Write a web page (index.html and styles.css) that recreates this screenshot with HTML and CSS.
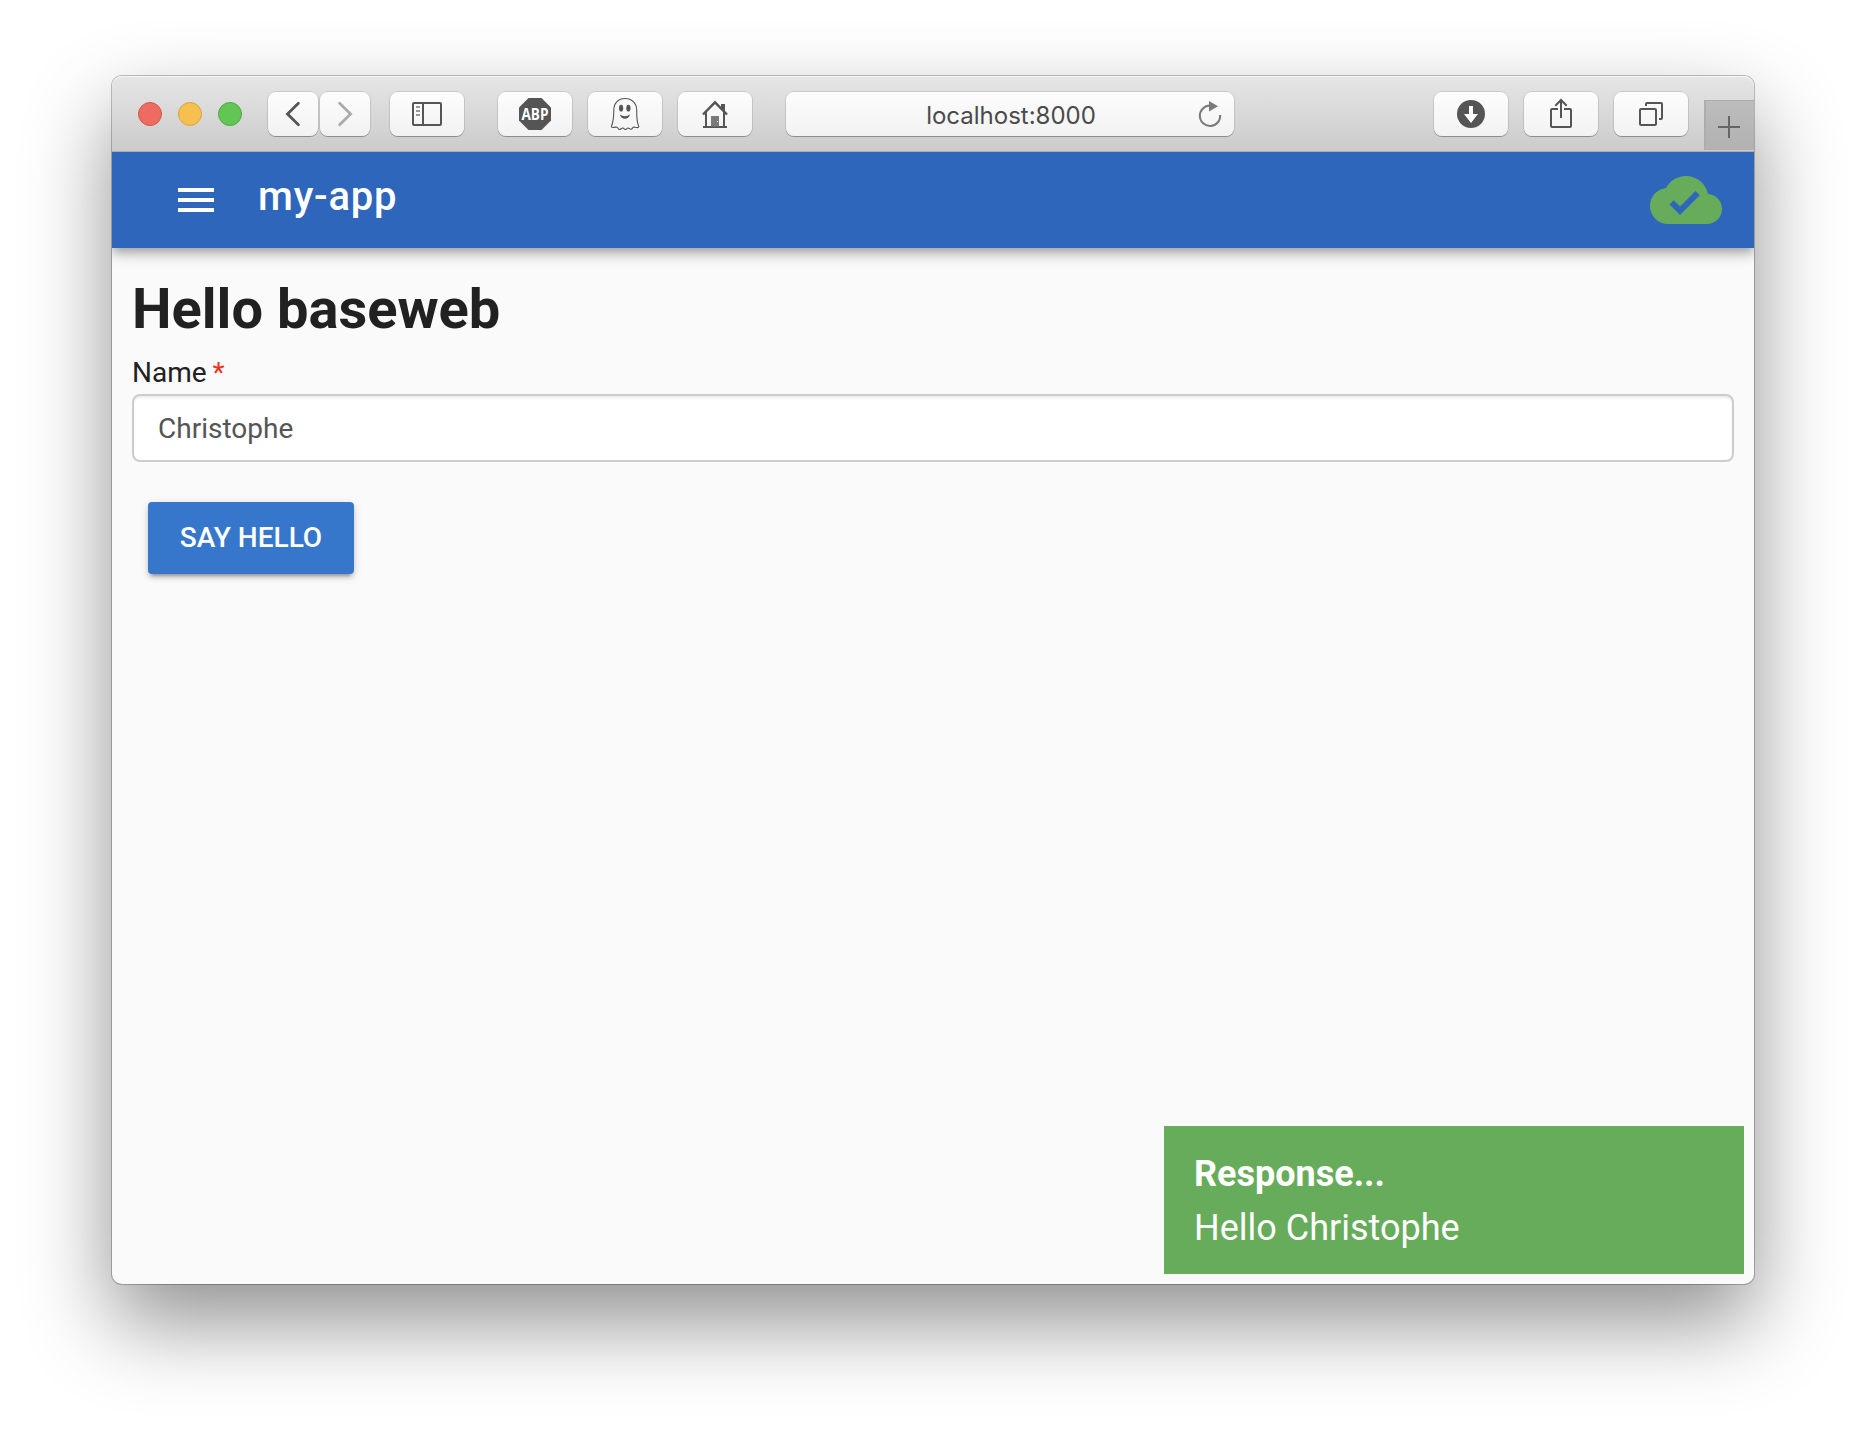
FILE: index.html
```html
<!DOCTYPE html>
<html lang="en">
<head>
<meta charset="utf-8">
<title>my-app</title>
<link rel="stylesheet" href="styles.css">
</head>
<body>
<div class="window">
  <header class="toolbar">
    <div class="lights">
      <span class="light light-close"></span>
      <span class="light light-min"></span>
      <span class="light light-max"></span>
    </div>
    <div class="nav">
      <button class="tool tool-nav" aria-label="Back"><svg width="50" height="44" viewBox="0 0 50 44"><path d="M30.400 11.200 19.500 22l10.900 10.800" stroke-width="2.800" stroke-linecap="round"/></svg></button>
      <button class="tool tool-nav tool-disabled" aria-label="Forward"><svg width="50" height="44" viewBox="0 0 50 44"><path d="M19.600 11.200 30.600 22l-11 10.800" stroke-width="2.800" stroke-linecap="round"/></svg></button>
    </div>
    <button class="tool tool-sidebar" aria-label="Sidebar"><svg width="74" height="44" viewBox="0 0 74 44"><rect x="23" y="11" width="28" height="22" rx="1"/><path d="M33 11v22"/><path class="faint" d="M26 15h4M26 19h4M26 23h4"/></svg></button>
    <div class="extensions">
      <button class="tool" aria-label="Adblock"><svg width="74" height="44" viewBox="0 0 74 44"><path class="solid" d="M30.500 6h13L53 15.500v13L43.500 38h-13L21 28.500v-13z"/><text class="abp" x="37" y="27.500" text-anchor="middle" textLength="27" lengthAdjust="spacingAndGlyphs">ABP</text></svg></button>
      <button class="tool" aria-label="Ghost"><svg width="74" height="44" viewBox="0 0 74 44"><path stroke-width="1.100" d="M37 6.500C30.500 6.500 25.800 11 25.800 18C25.800 25 25.800 29 23.300 34.600C23.600 36 25.500 35.500 28.500 35C30 35 30 37.500 31.500 37.500C33 37.300 33.500 35.800 35 36C36 36.200 36 37.500 37.300 37.500C38.500 37.500 38.700 36 40 36C41.500 36 41.500 37.500 43 37.300C44.500 37 44.500 35 46 35C48.500 35.500 50.500 36.200 50.800 34.600C48.500 29.500 48.700 25 48.700 18C48.700 11 43.500 6.500 37 6.500z"/><ellipse class="solid" cx="33.100" cy="16.200" rx="2.100" ry="3.400"/><ellipse class="solid" cx="40.400" cy="16.200" rx="2.100" ry="3.400"/><path class="solid" d="M31.800 22.500Q37 26 42 22.500Q40.500 26.800 37 26.800Q33.300 26.800 31.800 22.500z"/></svg></button>
      <button class="tool" aria-label="Home"><svg width="74" height="44" viewBox="0 0 74 44"><path d="M25 22.500 37 10.300l12 12.200" stroke-width="2.400"/><path d="M28 20v15M46 20v15M25 35h24"/><path class="solid" d="M43 12h4v8.500l-4-4z"/><path class="door" d="M33 24h8v10.500h-8z"/><path stroke="#fff" stroke-width="1" d="M39 29.500h1"/></svg></button>
    </div>
    <div class="address">
      <span class="url">localhost:8000</span>
      <svg class="reload" width="28" height="32" viewBox="0 0 28 32"><path d="M14 6.600A10.200 10.200 0 1 0 24.200 16"/><path class="tip" d="M13 2l9 5.300-9 5.300z"/></svg>
    </div>
    <div class="actions">
      <button class="tool" aria-label="Downloads"><svg width="74" height="44" viewBox="0 0 74 44"><circle class="solid" cx="37" cy="22" r="14"/><path fill="#fff" stroke="none" d="M35 14h4v8h5l-7 9-7-9h5z"/></svg></button>
      <button class="tool" aria-label="Share"><svg width="74" height="44" viewBox="0 0 74 44"><path d="M34 17h-6q-1 0-1 1v16q0 1 1 1h18q1 0 1-1V18q0-1-1-1h-6M37 26V8"/><path d="M31.300 13.800 37 8l5.700 5.800"/></svg></button>
      <button class="tool" aria-label="Tabs"><svg width="74" height="44" viewBox="0 0 74 44"><rect x="26" y="17" width="16" height="16" rx="1"/><path d="M32 14v-2q0-1 1-1h14q1 0 1 1v14q0 1-1 1h-2"/></svg></button>
    </div>
    <button class="new-tab" aria-label="New tab"><svg width="50" height="50" viewBox="0 0 50 50"><path d="M14 27h22M25 16v22"/></svg></button>
  </header>

  <div class="appbar">
    <svg class="menu" width="36" height="24" viewBox="0 0 36 24"><path d="M0 0h36v4H0zM0 10h36v4H0zM0 20h36v4H0z"/></svg>
    <div class="brand">my-app</div>
    <svg class="cloud" width="72" height="72" viewBox="0 0 24 24"><path d="M19.350 10.040C18.670 6.590 15.640 4 12 4 9.110 4 6.600 5.640 5.350 8.040 2.340 8.360 0 10.910 0 14c0 3.310 2.690 6 6 6h13c2.760 0 5-2.240 5-5 0-2.640-2.050-4.780-4.650-4.960zM10 17l-3.500-3.500 1.410-1.410L10 14.170 15.180 9l1.410 1.410L10 17z"/></svg>
  </div>

  <main class="content">
    <h1 class="heading">Hello baseweb</h1>
    <label class="label" for="name">Name<span class="required">*</span></label>
    <input class="input" id="name" type="text" value="Christophe">
    <button class="submit">SAY HELLO</button>
  </main>

  <div class="toast">
    <div class="toast-title">Response...</div>
    <div>Hello Christophe</div>
  </div>
</div>
</body>
</html>
```

FILE: styles.css
```css
* { box-sizing: border-box; }

body {
  margin: 0;
  height: 1432px;
  padding: 76px 112px 148px;
  background: #fff;
  font-family: Roboto, sans-serif;
  overflow: hidden;
}

button { font: inherit; border: 0; padding: 0; }

.window {
  position: relative;
  height: 1208px;
  border-radius: 10px;
  background: #fafafa;
  box-shadow: 0 0 0 1px rgba(0, 0, 0, .24), 0 38px 86px rgba(0, 0, 0, .44);
  display: flex;
  flex-direction: column;
}

/* Browser toolbar */
.toolbar {
  height: 76px;
  flex: none;
  display: flex;
  align-items: flex-start;
  padding: 16px 0 0 26px;
  border-radius: 10px 10px 0 0;
  border-bottom: 1px solid #adadad;
  background: linear-gradient(#e6e6e6, #cbcbcb);
  box-shadow: inset 0 1px 0 #f6f6f6;
}

.lights { display: flex; gap: 16px; padding-top: 10px; }
.light { width: 24px; height: 24px; border-radius: 50%; border: 1px solid; }
.light-close { background: #ed6b60; border-color: #d8554c; }
.light-min { background: #f5c04f; border-color: #dba33c; }
.light-max { background: #62c655; border-color: #50a944; }

.nav { display: flex; gap: 2px; margin-left: 26px; }

.tool {
  width: 74px;
  height: 44px;
  border-radius: 8px;
  background: linear-gradient(#fdfdfd, #f2f2f2);
  box-shadow: 0 0 0 1px rgba(0, 0, 0, .1), 0 1px 0 rgba(0, 0, 0, .25);
}
.tool-nav { width: 50px; }
.tool-sidebar { margin-left: 20px; }
.tool svg, .new-tab svg { display: block; fill: none; stroke: #555; stroke-width: 2; }
.tool-disabled svg { stroke: #ababab; }
.tool .solid { fill: #555; stroke: none; }
.tool .faint { stroke: #999; }
.tool .door { fill: #7a7a7a; stroke: none; }
.tool .abp { font: 700 15.5px "Open Sans", sans-serif; fill: #fff; stroke: none; }

.extensions { display: flex; gap: 16px; margin-left: 34px; }

.address {
  width: 448px;
  height: 44px;
  margin-left: 34px;
  padding: 0 10px;
  border-radius: 8px;
  background: linear-gradient(#fdfdfd, #f2f2f2);
  box-shadow: 0 0 0 1px rgba(0, 0, 0, .1), 0 1px 0 rgba(0, 0, 0, .25);
  display: grid;
  grid-template-columns: 28px 1fr 28px;
  align-items: center;
}
.url {
  grid-column: 2;
  text-align: center;
  font: 400 24px/44px Inter, sans-serif;
  color: #4a4a4a;
  padding: 2px 0 0 2px;
}
.reload { fill: none; stroke: #7a7a7a; stroke-width: 2; }
.tip { fill: #7a7a7a; stroke: none; }

.actions { display: flex; gap: 16px; margin-left: 200px; }

.new-tab {
  width: 50px;
  height: 50px;
  margin: 8px 0 0 16px;
  background: linear-gradient(#bdbdbd, #b1b1b1);
  box-shadow: inset 2px 1px 0 #adadad;
}
.new-tab svg { stroke: #666; }

/* Application bar */
.appbar {
  height: 96px;
  flex: none;
  display: flex;
  align-items: center;
  padding: 0 32px 0 66px;
  background: #2e66bb;
  color: #fff;
  box-shadow: 0 4px 8px -2px rgba(0, 0, 0, .2), 0 8px 10px rgba(0, 0, 0, .14), 0 2px 20px rgba(0, 0, 0, .12);
  clip-path: inset(0 0 -40px 0);
}
.menu { fill: #fff; }
.brand {
  margin-left: 44px;
  padding-bottom: 6px;
  font-size: 40px;
  line-height: 60px;
  font-weight: 500;
  letter-spacing: .8px;
}
.cloud { margin-left: auto; fill: #67ac5b; }

/* Page content */
.content {
  padding: 19px 20px;
  display: flex;
  flex-direction: column;
  align-items: flex-start;
}
.heading {
  margin: 0;
  font-size: 56px;
  line-height: 84px;
  font-weight: 700;
  color: #212121;
}
.label {
  margin-top: 1px;
  font-size: 28px;
  line-height: 42px;
  color: #212121;
}
.required { margin-left: 6px; color: #ea3323; }
.input {
  width: 100%;
  height: 68px;
  padding: 0 24px;
  border: 2px solid #ccc;
  border-radius: 8px;
  background: #fff;
  box-shadow: inset 0 2px 2px rgba(0, 0, 0, .075);
  font: 400 28px Roboto, sans-serif;
  color: #555;
}
.submit {
  width: 206px;
  height: 72px;
  margin: 40px 0 0 16px;
  padding-bottom: 2px;
  border-radius: 4px;
  background: #3777cb;
  color: #fff;
  font-size: 28px;
  font-weight: 500;
  box-shadow: 0 6px 2px -4px rgba(0, 0, 0, .2), 0 4px 4px rgba(0, 0, 0, .14), 0 2px 10px rgba(0, 0, 0, .12);
}

/* Notification floating over the page corner */
.toast {
  position: absolute;
  right: 10px;
  bottom: 10px;
  width: 580px;
  height: 148px;
  padding: 21px 30px 19px;
  background: #67ac5b;
  color: #fff;
  font-size: 36px;
  line-height: 54px;
}
.toast-title { font-weight: 700; }
```
